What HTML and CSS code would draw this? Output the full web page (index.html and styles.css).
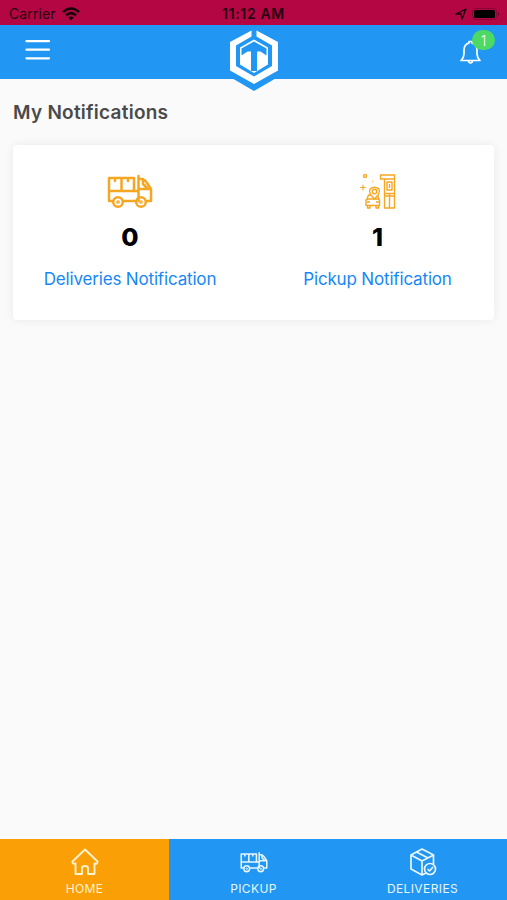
FILE: index.html
```html
<!DOCTYPE html>
<html lang="en">
<head>
  <meta charset="UTF-8">
  <meta name="viewport" content="width=device-width, initial-scale=1.0">
  <title>My Notifications</title>
  <link rel="stylesheet" href="styles.css">
</head>
<body>
  <svg width="0" height="0" class="sprite">
    <symbol id="truck" viewBox="0 0 46 34">
      <g fill="none" stroke="currentColor" stroke-width="2.5" stroke-linejoin="round" stroke-linecap="round">
        <path d="M5 27H2V4H27V17H2M14.500 4V17M8 4V7M21 4V7"/>
        <path d="M31.500 27V2M31.500 5H34Q38 5 40 9L44 15V27H40M31.500 15H44M36 5V10L40 14M27 17H31M17 27H28"/>
        <circle cx="11" cy="28" r="4.800"/><circle cx="34" cy="28" r="4.800"/>
        <circle cx="11" cy="28" r="1.200" stroke-width="1.300"/><circle cx="34" cy="28" r="1.200" stroke-width="1.300"/>
      </g>
    </symbol>
  </svg>

  <div class="status-bar">
    <div class="carrier">
      <span>Carrier</span>
      <svg width="18" height="14" viewBox="0 0 18 14" fill="none" stroke="#18000a" stroke-width="2.500">
        <path d="M1 5Q9 -2 17 5M4 8.300Q9 4 14 8.300"/>
        <path d="M6.300 10.500Q9 8.300 11.700 10.500L9 13.500Z" fill="#18000a" stroke="none"/>
      </svg>
    </div>
    <span class="time">11:12 AM</span>
    <div class="battery">
      <svg width="12" height="12" viewBox="0 0 12 12" fill="none" stroke="#18000a" stroke-width="1.300" stroke-linejoin="round"><path d="M1 6L11 1L7 11L6 6Z"/></svg>
      <svg width="29" height="12" viewBox="0 0 29 12"><rect x=".5" y=".5" width="24" height="11" rx="3" fill="none" stroke="#8a0436"/><rect x="2" y="2" width="21" height="8" rx="1.500"/><path d="M26 4Q28 6 26 8Z" fill="#65002a"/></svg>
    </div>
  </div>

  <header class="header">
    <svg class="menu" width="26" height="22" viewBox="0 0 26 22" stroke="#fff" stroke-width="2.300" stroke-linecap="round"><path d="M1.500 2.200H24M1.500 10.700H24M1.500 19.300H24"/></svg>
    <svg class="logo" width="50" height="66" viewBox="0 0 50 66">
      <path d="M25 0L49 14V51L25 65L1 51V14Z" fill="#2196f3"/>
      <path d="M22.500 4.500V10.500L7 19.500V40L25 50.500L43 40V19.500L27.500 10.500V4.500L49 16V44.500L25 58L1 44.500V16Z" fill="#fff"/>
      <path d="M25 13.500L39 21.500V38.500L25 47L11 38.500V21.500Z" fill="#fff"/>
      <path d="M12.500 22.500L25 15.500L37.500 22.500V29.500L31.500 25.500H28V45H22V25.500H18.500L12.500 29.500Z" fill="#2196f3"/>
    </svg>
    <div class="bell">
      <svg width="24" height="27" viewBox="0 0 24 27" fill="none" stroke="#fff" stroke-width="1.700" stroke-linecap="round" stroke-linejoin="round">
        <path d="M2 21.500Q5 18.500 5 15V11Q5 5.500 10 4V2.500H13V4Q18 5.500 18 11V15Q18 18.500 21 21.500ZM9.500 22.500Q11.500 25.500 13.500 22.500"/>
      </svg>
      <span class="badge">1</span>
    </div>
  </header>

  <main class="content">
    <h1>My Notifications</h1>
    <div class="card">
      <div class="item">
        <svg class="icon" width="46" height="34"><use href="#truck"/></svg>
        <strong>0</strong>
        <a>Deliveries Notification</a>
      </div>
      <div class="item">
        <svg class="icon" width="38" height="36" viewBox="0 0 38 36" fill="none" stroke="currentColor" stroke-width="1.400" stroke-linejoin="round">
          <circle cx="6" cy="3" r="1.500"/>
          <path d="M1.500 14.500H6.500M4 12V17" stroke-linecap="round" stroke-width="1.100"/>
          <path d="M13.800 7.500V9.500" stroke-width=".7"/>
          <!-- car with map pin -->
          <path d="M8 26L9.500 22H12M18.500 22L20 26M7 32.500V27L9 26H19L20.500 27V32.500ZM8.500 32.500V35H11V32.500M17 32.500V35H19.500V32.500M8 29H11M17 29H20"/>
          <path d="M15.500 26L11.500 21.500Q8.500 14.500 15.500 14.200Q22.500 14.500 19.500 21.500Z"/><circle cx="15.500" cy="18.500" r="2.200"/>
          <!-- building -->
          <path d="M21.500 2H35.500V6H21.500ZM25.500 6V35H35.500V6M28 9H33V17H28ZM30.500 11V15M25.500 20.500H35.500M30.500 20V35M25.500 23H35.500"/>
        </svg>
        <strong>1</strong>
        <a>Pickup Notification</a>
      </div>
    </div>
  </main>

  <nav class="tabs">
    <div class="tab active">
      <svg width="28" height="28" viewBox="0 0 28 28" fill="none" stroke="currentColor" stroke-width="1.900" stroke-linejoin="round"><path d="M14 1.500L26.500 13.500Q27 16.500 23.500 15.500V26H17V20Q17 18 14 18Q11 18 11 20V26H4.500V15.500Q1 16.500 1.500 13.500Z"/></svg>
      <span>HOME</span>
    </div>
    <div class="tab">
      <svg width="28" height="28"><use href="#truck"/></svg>
      <span>PICKUP</span>
    </div>
    <div class="tab">
      <svg width="28" height="28" viewBox="0 0 28 28" fill="none" stroke="currentColor" stroke-width="1.700" stroke-linejoin="round">
        <path d="M17 25L13 27L2 21V7L13 1L24.500 7V16M2 7L13 13L24.500 7M13 13V27M7.500 4L19 10"/>
        <circle cx="21" cy="21" r="5.500" fill="#2196f3"/><path d="M18.500 21L20.500 23L24 19"/>
      </svg>
      <span>DELIVERIES</span>
    </div>
  </nav>
</body>
</html>
```
FILE: styles.css
```css
:root {
  --blue: #2196f3;
  --orange: #fa9f05;
  --link: #1687f8;
}

* {
  box-sizing: border-box;
}

body {
  margin: 0;
  height: 100vh;
  display: flex;
  flex-direction: column;
  background: #fafafa;
  font-family: Inter, sans-serif;
}

.sprite {
  position: absolute;
}

.status-bar {
  height: 25px;
  display: grid;
  grid-template-columns: 1fr auto 1fr;
  align-items: center;
  padding: 2px 6px 0 9px;
  background: #b30643;
  color: #25000e;
  font-size: 14px;
}

.carrier,
.battery {
  display: flex;
  align-items: center;
  gap: 6px;
}

.carrier span {
  letter-spacing: 0.1px;
}

.battery {
  justify-content: flex-end;
  gap: 5px;
}

.time {
  margin-right: 3px;
  font-weight: 600;
  letter-spacing: 0.65px;
}

.header {
  height: 54px;
  display: grid;
  grid-template-columns: 1fr 50px 1fr;
  align-items: start;
  padding: 0 12px 0 24px;
  background: var(--blue);
}

.menu {
  margin: 14px 0 0 1px;
}

/* the logo hangs below the header */
.logo {
  margin: 1px 0 -20px -6px;
}

.bell {
  position: relative;
  justify-self: end;
  width: 36px;
  padding-top: 14px;
}

.badge {
  position: absolute;
  top: 5px;
  right: 0;
  width: 23px;
  height: 20px;
  border-radius: 10px;
  background: #4cd964;
  color: #fff;
  font-size: 14px;
  font-weight: 300;
  line-height: 21px;
  text-align: center;
}

.content {
  flex: 1;
  padding: 0 13px;
}

h1 {
  margin: 21px 0 20px;
  font-size: 19px;
  line-height: 25px;
  font-weight: 600;
  letter-spacing: 0.25px;
  color: #4a4a4a;
}

.card {
  height: 175px;
  display: grid;
  grid-template-columns: 234px 1fr;
  column-gap: 14px;
  background: #fff;
  border-radius: 4px;
  box-shadow: 0 0 10px rgba(0, 0, 0, 0.07);
}

.item {
  display: flex;
  flex-direction: column;
  align-items: center;
  padding-top: 28px;
}

.icon {
  height: 36px;
  color: #f5a623;
}

.item strong {
  margin-top: 13px;
  font-size: 25px;
  line-height: 30px;
  font-weight: 800;
}

.item a {
  margin-top: 16px;
  font-size: 17px;
  line-height: 22px;
  letter-spacing: -0.17px;
  color: var(--link);
}

.tabs {
  height: 61px;
  display: grid;
  grid-template-columns: repeat(3, 1fr);
  background: var(--blue);
}

.tab {
  display: flex;
  flex-direction: column;
  align-items: center;
  padding-top: 9px;
  color: #e8f6ff;
  font-size: 12px;
}

.tab.active {
  background: var(--orange);
  color: #fff3d0;
}

.tab span {
  margin-top: 5px;
  line-height: 15px;
  letter-spacing: 0.4px;
}
```
